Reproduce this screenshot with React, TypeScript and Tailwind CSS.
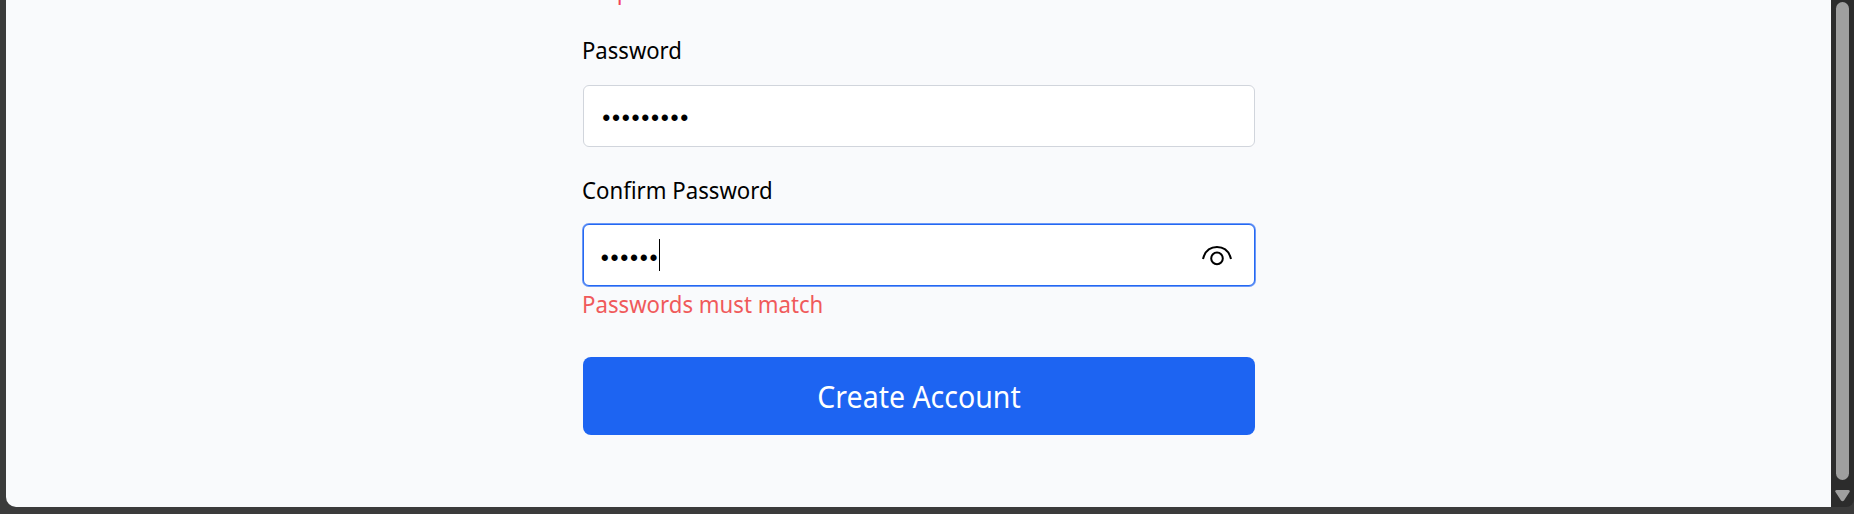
import React from 'react';

function Label({ children, className }: { children: React.ReactNode; className: string }) {
  return (
    <div className="h-9">
      <span className={`inline-block origin-left whitespace-nowrap leading-9 ${className}`}>{children}</span>
    </div>
  );
}

function Dots({ count }: { count: number }) {
  return (
    <div className="flex pt-[3px] font-['Liberation_Sans',sans-serif]">
      {Array.from({ length: count }, (_, i) => (
        <span key={i} className="flex w-[9.75px] justify-center text-[23px] leading-8">
          •
        </span>
      ))}
    </div>
  );
}

export default function App() {
  return (
    <div className="flex h-[514px] w-[1854px] overflow-hidden bg-[#3b3b3b] pb-[7px] pl-1.5 font-['Noto_Sans','Open_Sans',sans-serif] text-[24px] text-black">
      <main className="h-[507px] w-[1825px] overflow-hidden rounded-bl-[10px] bg-[#f9fafc]">
        <form className="-mt-7 ml-[577px] w-[672px]">
          <Label className="scale-x-[0.915] text-[#f4405a]">Required</Label>
          <div className="mt-6">
            <Label className="-ml-px scale-x-[0.92]">Password</Label>
          </div>
          <div className="mt-[17px] flex h-[62px] items-center rounded-md border border-[#d1d5dc] bg-white pl-[17.5px]">
            <Dots count={9} />
          </div>
          <div className="mt-[25px]">
            <Label className="-ml-px scale-x-[0.925]">Confirm Password</Label>
          </div>
          <div className="mt-4 flex h-[62px] items-center justify-between rounded-md border border-[#2468f2] bg-white pr-[21.5px] pl-4 shadow-[0_0_0_1px_#6b98f7]">
            <div className="flex h-8 items-start">
              <Dots count={6} />
              <span className="h-8 w-px bg-black" />
            </div>
            <svg width="32" height="22" viewBox="0 0 32 22" fill="none" stroke="black" strokeWidth="2">
              <path d="M2 15C4 7 9 3 16 3s12 4 14 12" />
              <circle cx="16" cy="14.4" r="5.8" />
            </svg>
          </div>
          <Label className="-ml-px scale-x-[0.925] text-[#f05a5b]">Passwords must match</Label>
          <button type="button" className="mt-[35px] flex h-[78px] w-full items-center justify-center rounded-lg bg-[#1d64f2] pt-px text-[30px] text-white">
            <span className="scale-x-[0.95] whitespace-nowrap">Create Account</span>
          </button>
        </form>
      </main>
      <aside className="flex h-[507px] w-[23px] flex-col items-center rounded-br-[8px] bg-[#2c2c2c] pt-0.5">
        <div className="h-[478px] w-[13px] rounded-full bg-[#9f9f9f]" />
        <svg className="mt-2.5" width="15" height="12" viewBox="0 0 15 12" fill="#9f9f9f">
          <path d="M1.5 0h12q2 .5 1 2L9 10.5q-1.500 1.500-3 0L.5 2Q-.5 .5 1.500 0z" />
        </svg>
      </aside>
    </div>
  );
}
